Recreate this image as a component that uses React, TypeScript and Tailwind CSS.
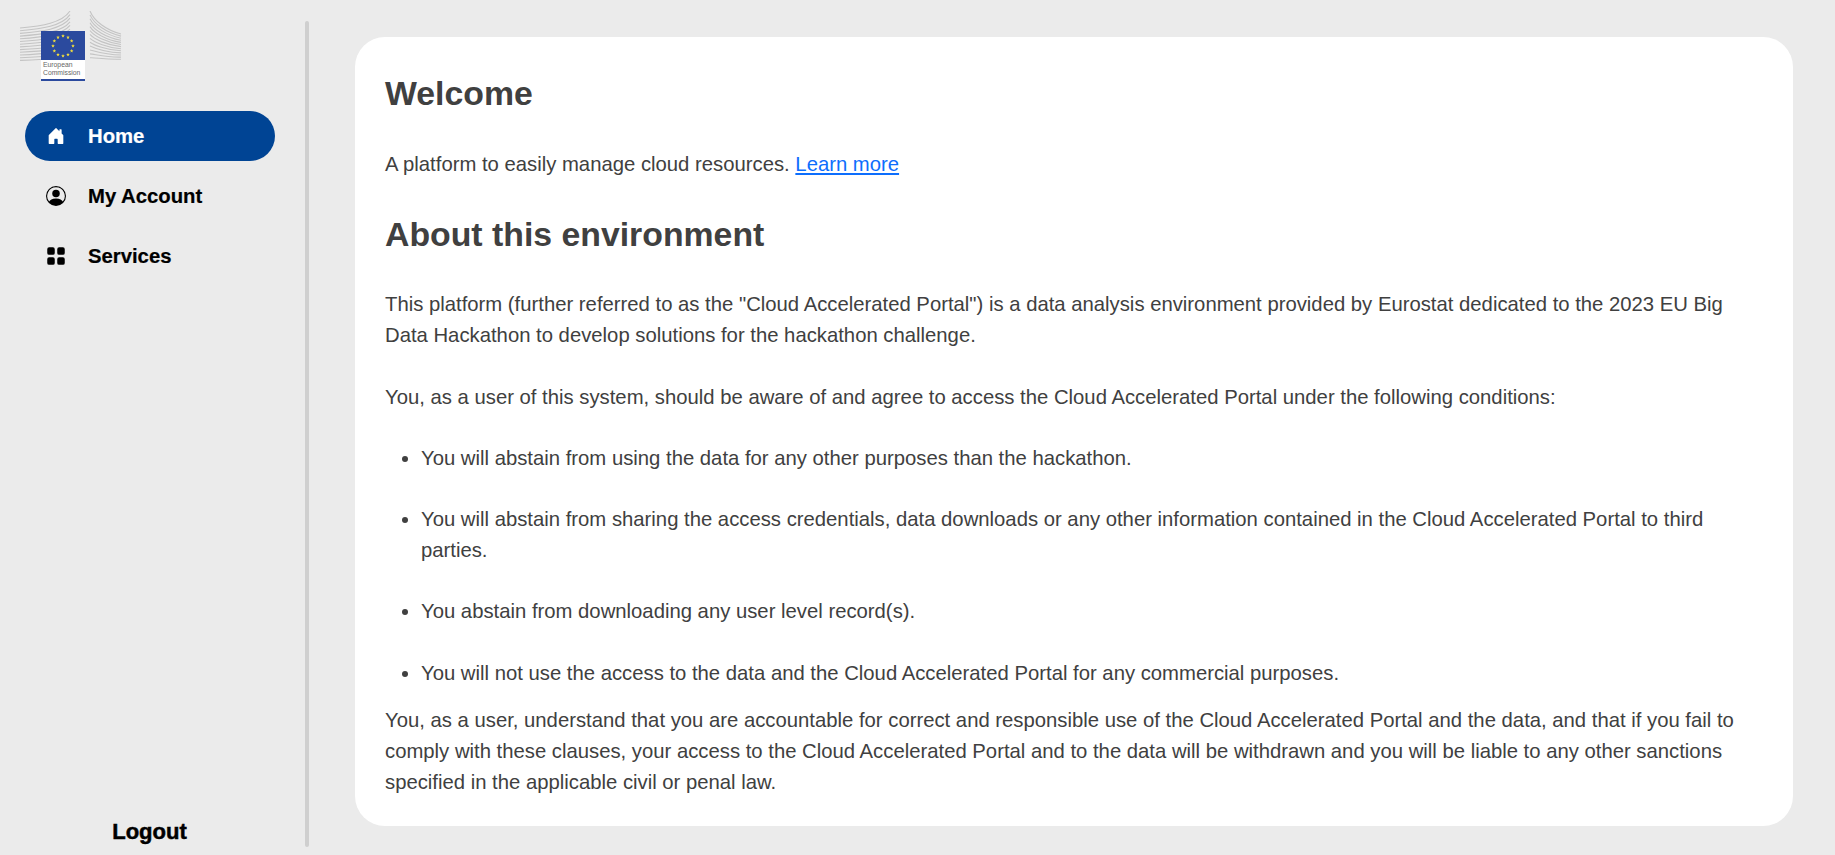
import { BsHouseDoorFill, BsPersonCircle, BsGridFill } from 'react-icons/bs';

const buildingLines = [0, 1, 2, 3, 4, 5, 6, 7, 8, 9, 10, 11, 12];

// Commission logo: the building lines, the flag and the label
function Logo() {
  const stars = Array.from({ length: 12 }, (_, i) => {
    const a = (i * Math.PI) / 6;
    const cx = 22 + 10 * Math.sin(a);
    const cy = 15 - 10 * Math.cos(a);
    const pts = Array.from({ length: 10 }, (_, k) => {
      const r = k % 2 === 0 ? 1.9 : 0.8;
      const b = (k * Math.PI) / 5;
      return `${cx + r * Math.sin(b)},${cy - r * Math.cos(b)}`;
    }).join(' ');
    return pts;
  });

  return (
    <div className="relative h-[72px] w-[102px]">
      <svg width="102" height="72" viewBox="0 0 102 72" className="absolute inset-0">
        <g stroke="#c4c4c4" strokeWidth="1.1" fill="none">
          {buildingLines.map((i) => (
            <path key={i} d={`M0 ${17 + i * 2.7} C 22 ${15 + i * 2.8}, 42 ${12 + i * 3}, 50 ${i * 3.6}`} />
          ))}
          {buildingLines.map((i) => (
            <path key={`r${i}`} d={`M70 ${i * 3.9} C 74 ${10 + i * 3}, 86 ${19 + i * 2.5}, 101 ${23 + i * 2.1}`} />
          ))}
        </g>
      </svg>
      <div className="absolute left-[21px] top-[20px] flex h-[50px] w-[44px] flex-col bg-white">
        <svg width="44" height="29" viewBox="0 0 44 29" className="shrink-0">
          <rect width="44" height="29" fill="#2b4a9e" />
          {stars.map((pts, i) => (
            <polygon key={i} points={pts} fill="#f5e03a" />
          ))}
        </svg>
        <div className="flex-1 pl-[2px] pt-[1px] text-[6.8px] leading-[7.5px] text-[#666666]">
          European
          <br />
          Commission
        </div>
        <div className="h-[2px] bg-[#2b4a9e]" />
      </div>
    </div>
  );
}

export default function App() {
  return (
    <div className="flex h-[855px] overflow-hidden bg-[#ebebeb] font-['Liberation_Sans',Arial,sans-serif]">
      {/* Sidebar */}
      <aside className="flex w-[305px] shrink-0 flex-col pl-[20px] pt-[11px] pb-[7px]">
        <Logo />
        <nav className="mt-[28px] flex flex-col gap-[10px] pl-[5px] pr-[30px] text-[20.3px] font-bold [-webkit-text-stroke:0.2px]">
          <a className="flex h-[50px] items-center gap-[23px] rounded-full bg-[#004494] pl-[22px] text-white">
            <BsHouseDoorFill size={18} />
            Home
          </a>
          <a className="flex h-[50px] items-center gap-[22px] pl-[21px] text-black">
            <BsPersonCircle size={20} />
            My Account
          </a>
          <a className="flex h-[50px] items-center gap-[22px] pl-[21px] text-black">
            <BsGridFill size={20} />
            Services
          </a>
        </nav>
        <button className="mt-auto pr-[26px] text-center text-[22px] font-bold text-black [-webkit-text-stroke:0.5px_black]">
          Logout
        </button>
      </aside>

      {/* Divider */}
      <div className="mt-[21px] h-[826px] w-[4px] shrink-0 rounded-full bg-[#cfcfcf]" />

      {/* Main card */}
      <main className="ml-[46px] mt-[37px] h-[789px] w-[1438px] rounded-[30px] bg-white px-[30px] pt-[35px] text-[20.3px] leading-[31.2px] text-[#404040]">
        <h1 className="text-[33.8px] font-bold leading-[42px]">Welcome</h1>
        <p className="mt-[35px]">
          A platform to easily manage cloud resources.{' '}
          <a className="text-[#0d6efd] underline">Learn more</a>
        </p>
        <h2 className="mt-[33px] text-[33.8px] font-bold leading-[42px]">About this environment</h2>
        <p className="mt-[34px]">
          This platform (further referred to as the "Cloud Accelerated Portal") is a data analysis environment provided by Eurostat dedicated to the 2023 EU Big Data Hackathon to develop solutions for the hackathon challenge.
        </p>
        <p className="mt-[30px]">
          You, as a user of this system, should be aware of and agree to access the Cloud Accelerated Portal under the following conditions:
        </p>
        <ul className="mt-[30px] flex list-disc flex-col gap-[30px] pl-[36px]">
          <li>You will abstain from using the data for any other purposes than the hackathon.</li>
          <li>You will abstain from sharing the access credentials, data downloads or any other information contained in the Cloud Accelerated Portal to third parties.</li>
          <li>You abstain from downloading any user level record(s).</li>
          <li>You will not use the access to the data and the Cloud Accelerated Portal for any commercial purposes.</li>
        </ul>
        <p className="mt-[16px]">
          You, as a user, understand that you are accountable for correct and responsible use of the Cloud Accelerated Portal and the data, and that if you fail to comply with these clauses, your access to the Cloud Accelerated Portal and to the data will be withdrawn and you will be liable to any other sanctions specified in the applicable civil or penal law.
        </p>
      </main>
    </div>
  );
}
